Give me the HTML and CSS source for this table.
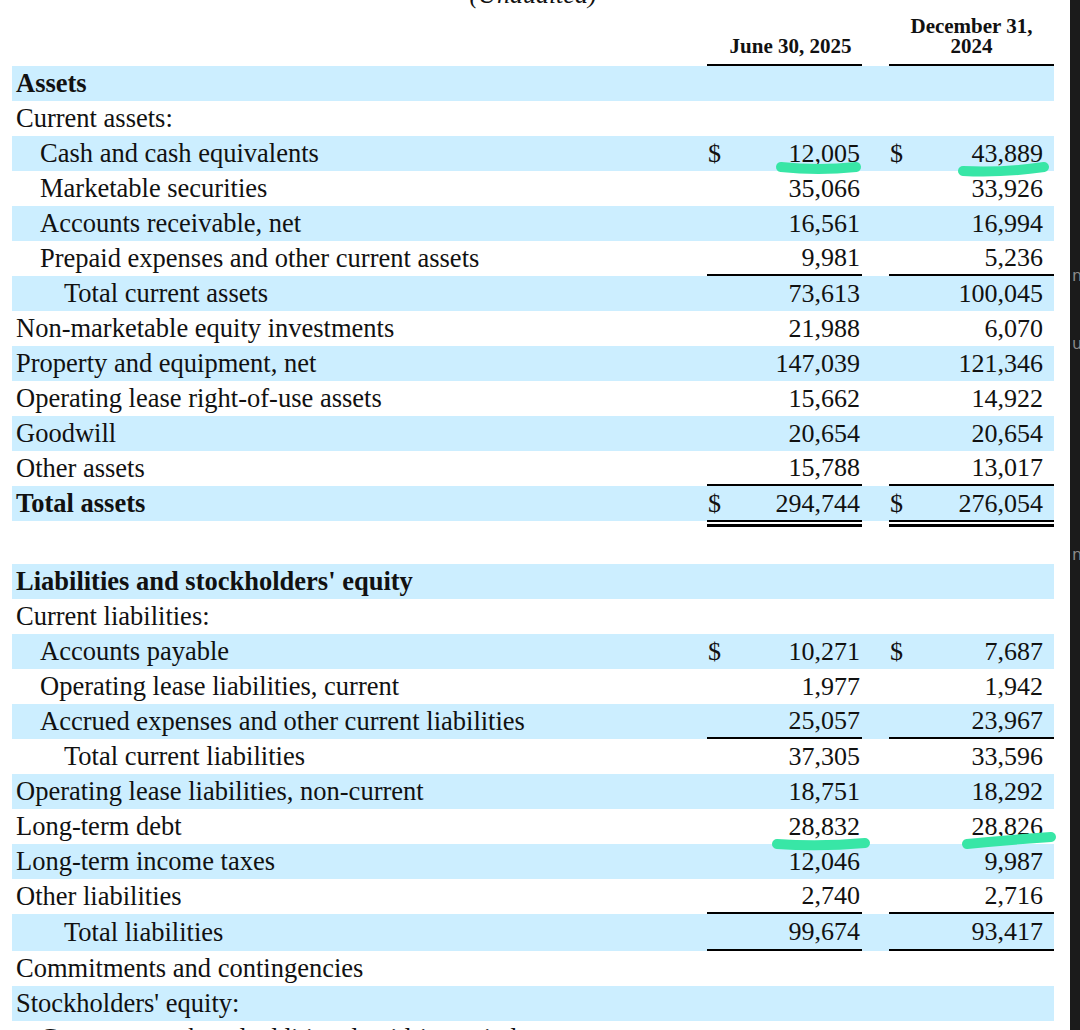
FILE: index.html
```html
<!DOCTYPE html>
<html lang="en">
<head>
  <meta charset="UTF-8">
  <meta name="viewport" content="width=device-width, initial-scale=1.0">
  <title>Condensed Consolidated Balance Sheets</title>
  <link rel="stylesheet" href="styles.css">
</head>
<body>
  <div class="page">
    <main class="sheet">
      <div class="caption">(Unaudited)</div>

      <div class="row head">
        <div></div>
        <div class="colhead first">June 30, 2025</div>
        <div></div>
        <div class="colhead">December 31,<br>2024</div>
      </div>

      <!-- Assets -->
      <div class="row shade"><div class="label bold">Assets</div></div>
      <div class="row"><div class="label">Current assets:</div></div>
      <div class="row shade">
        <div class="label l2">Cash and cash equivalents</div>
        <div class="amt now"><span class="cur">$</span>12,005</div><div></div>
        <div class="amt prior"><span class="cur">$</span>43,889</div>
      </div>
      <div class="row">
        <div class="label l2">Marketable securities</div>
        <div class="amt now">35,066</div><div></div>
        <div class="amt prior">33,926</div>
      </div>
      <div class="row shade">
        <div class="label l2">Accounts receivable, net</div>
        <div class="amt now">16,561</div><div></div>
        <div class="amt prior">16,994</div>
      </div>
      <div class="row rule">
        <div class="label l2">Prepaid expenses and other current assets</div>
        <div class="amt now">9,981</div><div></div>
        <div class="amt prior">5,236</div>
      </div>
      <div class="row shade">
        <div class="label l3">Total current assets</div>
        <div class="amt now">73,613</div><div></div>
        <div class="amt prior">100,045</div>
      </div>
      <div class="row">
        <div class="label">Non-marketable equity investments</div>
        <div class="amt now">21,988</div><div></div>
        <div class="amt prior">6,070</div>
      </div>
      <div class="row shade">
        <div class="label">Property and equipment, net</div>
        <div class="amt now">147,039</div><div></div>
        <div class="amt prior">121,346</div>
      </div>
      <div class="row">
        <div class="label">Operating lease right-of-use assets</div>
        <div class="amt now">15,662</div><div></div>
        <div class="amt prior">14,922</div>
      </div>
      <div class="row shade">
        <div class="label">Goodwill</div>
        <div class="amt now">20,654</div><div></div>
        <div class="amt prior">20,654</div>
      </div>
      <div class="row rule">
        <div class="label">Other assets</div>
        <div class="amt now">15,788</div><div></div>
        <div class="amt prior">13,017</div>
      </div>
      <div class="row shade grand">
        <div class="label bold">Total assets</div>
        <div class="amt now"><span class="cur">$</span>294,744</div><div></div>
        <div class="amt prior"><span class="cur">$</span>276,054</div>
      </div>

      <div class="spacer"></div>

      <!-- Liabilities -->
      <div class="row shade"><div class="label bold">Liabilities and stockholders' equity</div></div>
      <div class="row"><div class="label">Current liabilities:</div></div>
      <div class="row shade">
        <div class="label l2">Accounts payable</div>
        <div class="amt now"><span class="cur">$</span>10,271</div><div></div>
        <div class="amt prior"><span class="cur">$</span>7,687</div>
      </div>
      <div class="row">
        <div class="label l2">Operating lease liabilities, current</div>
        <div class="amt now">1,977</div><div></div>
        <div class="amt prior">1,942</div>
      </div>
      <div class="row shade rule">
        <div class="label l2">Accrued expenses and other current liabilities</div>
        <div class="amt now">25,057</div><div></div>
        <div class="amt prior">23,967</div>
      </div>
      <div class="row">
        <div class="label l3">Total current liabilities</div>
        <div class="amt now">37,305</div><div></div>
        <div class="amt prior">33,596</div>
      </div>
      <div class="row shade">
        <div class="label">Operating lease liabilities, non-current</div>
        <div class="amt now">18,751</div><div></div>
        <div class="amt prior">18,292</div>
      </div>
      <div class="row">
        <div class="label">Long-term debt</div>
        <div class="amt now">28,832</div><div></div>
        <div class="amt prior">28,826</div>
      </div>
      <div class="row shade">
        <div class="label">Long-term income taxes</div>
        <div class="amt now">12,046</div><div></div>
        <div class="amt prior">9,987</div>
      </div>
      <div class="row rule">
        <div class="label">Other liabilities</div>
        <div class="amt now">2,740</div><div></div>
        <div class="amt prior">2,716</div>
      </div>
      <div class="row shade rule subtotal">
        <div class="label l3">Total liabilities</div>
        <div class="amt now">99,674</div><div></div>
        <div class="amt prior">93,417</div>
      </div>
      <div class="row"><div class="label">Commitments and contingencies</div></div>
      <div class="row shade"><div class="label">Stockholders' equity:</div></div>
      <div class="row">
        <div class="label l2">Common stock and additional paid-in capital</div>
        <div class="amt now">89,406</div><div></div>
        <div class="amt prior">83,228</div>
      </div>
    </main>

    <aside class="edge">
      <span class="glyph g1">n</span>
      <span class="glyph g2">u</span>
      <span class="glyph g3">n</span>
    </aside>

    <!-- highlighter strokes -->
    <svg class="marks" width="1080" height="1030" viewBox="0 0 1080 1030">
      <path d="M781 167 Q818 171 856 167" />
      <path d="M963 171 Q1003 173 1044 167" />
      <path d="M777 844 Q820 847 865 843" />
      <path d="M967 844 Q1006 840 1051 837" />
    </svg>
  </div>
</body>
</html>
```

FILE: styles.css
```css
body {
  margin: 0;
  background: #fff;
  color: #111;
  font-family: "Liberation Serif", "Times New Roman", serif;
  font-size: 26px;
  overflow: hidden;
}

.page {
  position: relative;
  display: flex;
  width: 1080px;
  height: 1030px;
  overflow: hidden;
}

.sheet {
  width: 1042px;
  padding-left: 12px;
  padding-right: 16px;
}

.caption {
  margin-top: -18px;
  height: 26px;
  line-height: 26px;
  text-align: center;
  font-style: italic;
}

.row {
  display: grid;
  grid-template-columns: 1fr 155px 27px 165px;
  height: 35px;
}

.row.shade {
  background: #cceeff;
}

.row.head {
  height: 58px;
}

.colhead {
  align-self: end;
  border-bottom: 2px solid #000;
  padding-bottom: 8px;
  font-size: 21px;
  font-weight: bold;
  line-height: 20px;
  text-align: center;
}

.colhead.first {
  padding-left: 12px;
}

.label {
  grid-column: 1;
  display: flex;
  align-items: center;
  padding-left: 4px;
  font-size: 26.5px;
  white-space: nowrap;
}

.row > .label:only-child {
  grid-column: 1 / -1;
}

.label.l2 {
  padding-left: 28px;
}

.label.l3 {
  padding-left: 52px;
}

.bold {
  font-weight: bold;
}

.amt {
  display: flex;
  align-items: center;
  justify-content: flex-end;
  padding-left: 1px;
}

.amt.now {
  padding-right: 2px;
}

.amt.prior {
  padding-right: 11px;
}

.cur {
  margin-right: auto;
}

.row.rule .amt {
  border-bottom: 2px solid #000;
}

.row.subtotal {
  height: 37px;
}

.row.grand {
  height: 35px;
  margin-bottom: 6px;
}

/* double underline: thin line, gap, thicker line */
.row.grand .amt {
  position: relative;
}

.row.grand .amt::after {
  content: "";
  position: absolute;
  left: 0;
  right: 0;
  bottom: -6px;
  height: 2px;
  border-bottom: 3px solid #000;
  border-top: 2px solid #000;
}

.spacer {
  height: 37px;
}

.edge {
  position: relative;
  flex: 1;
  background: #1b1b1b;
}

.glyph {
  position: absolute;
  left: 2px;
  font-family: "DejaVu Sans", sans-serif;
  font-size: 16px;
  color: #8a8a8a;
}

.g1 { top: 266px; }
.g2 { top: 334px; }
.g3 { top: 545px; }

.marks {
  position: absolute;
  top: 0;
  left: 0;
  pointer-events: none;
}

.marks path {
  fill: none;
  stroke: #38e6a6;
  stroke-width: 10;
  stroke-linecap: round;
}
```
